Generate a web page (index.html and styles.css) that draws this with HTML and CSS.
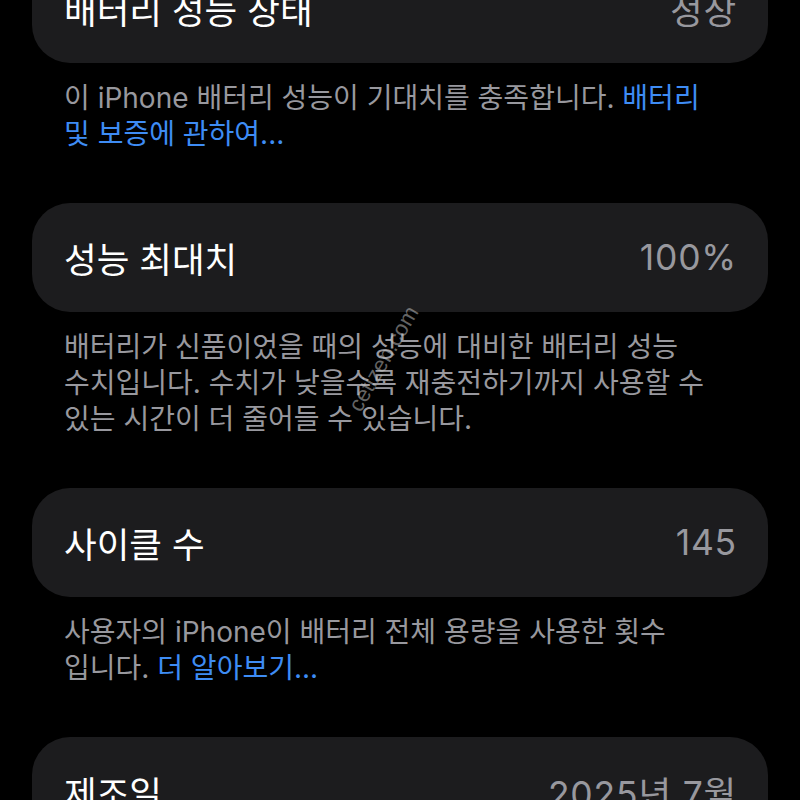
FILE: index.html
```html
<!DOCTYPE html>
<html lang="ko">
<head>
<meta charset="utf-8">
<link rel="stylesheet" href="styles.css">
</head>
<body>
<div class="screen">
  <div class="card">
    <span class="label">배터리 성능 상태</span>
    <span class="value">정상</span>
  </div>
  <p class="note">이 iPhone 배터리 성능이 기대치를 충족합니다. <span class="link">배터리<br>및 보증에 관하여...</span></p>

  <div class="card">
    <span class="label">성능 최대치</span>
    <span class="value">100%</span>
  </div>
  <p class="note">배터리가 신품이었을 때의 성능에 대비한 배터리 성능<br>수치입니다. 수치가 낮을수록 재충전하기까지 사용할 수<br>있는 시간이 더 줄어들 수 있습니다.</p>

  <div class="card">
    <span class="label">사이클 수</span>
    <span class="value">145</span>
  </div>
  <p class="note">사용자의 iPhone이 배터리 전체 용량을 사용한 횟수<br>입니다. <span class="link">더 알아보기...</span></p>

  <div class="card">
    <span class="label">제조일</span>
    <span class="value">2025년 7월</span>
  </div>
</div>
<div class="watermark">cetizen.com</div>
</body>
</html>
```

FILE: styles.css
```css
html, body {
  margin: 0;
  padding: 0;
  background: #000;
}
body {
  width: 800px;
  height: 800px;
  overflow: hidden;
  position: relative;
  font-family: Inter, "Noto Sans CJK KR", sans-serif;
}
.screen {
  margin-top: -46px;
  padding: 0 32px;
}
.card {
  height: 109px;
  box-sizing: border-box;
  background: #1c1c1e;
  border-radius: 38px;
  padding: 0 31px 0 32px;
  display: flex;
  align-items: center;
  justify-content: space-between;
}
.label {
  color: #ffffff;
  font-size: 35.5px;
}
.value {
  color: #98989e;
  font-size: 35.5px;
  letter-spacing: 0.8px;
}
.note {
  margin: 0;
  padding: 17px 32px 51px 32px;
  color: #98989e;
  font-size: 28px;
  line-height: 36px;
  white-space: nowrap;
}
.link {
  color: #3e8cf4;
}
.watermark {
  position: absolute;
  left: 325px;
  top: 346px;
  color: rgba(200, 200, 200, 0.5);
  font-size: 22px;
  font-family: "Liberation Sans", sans-serif;
  transform: rotate(-60deg);
  transform-origin: center;
}
```
